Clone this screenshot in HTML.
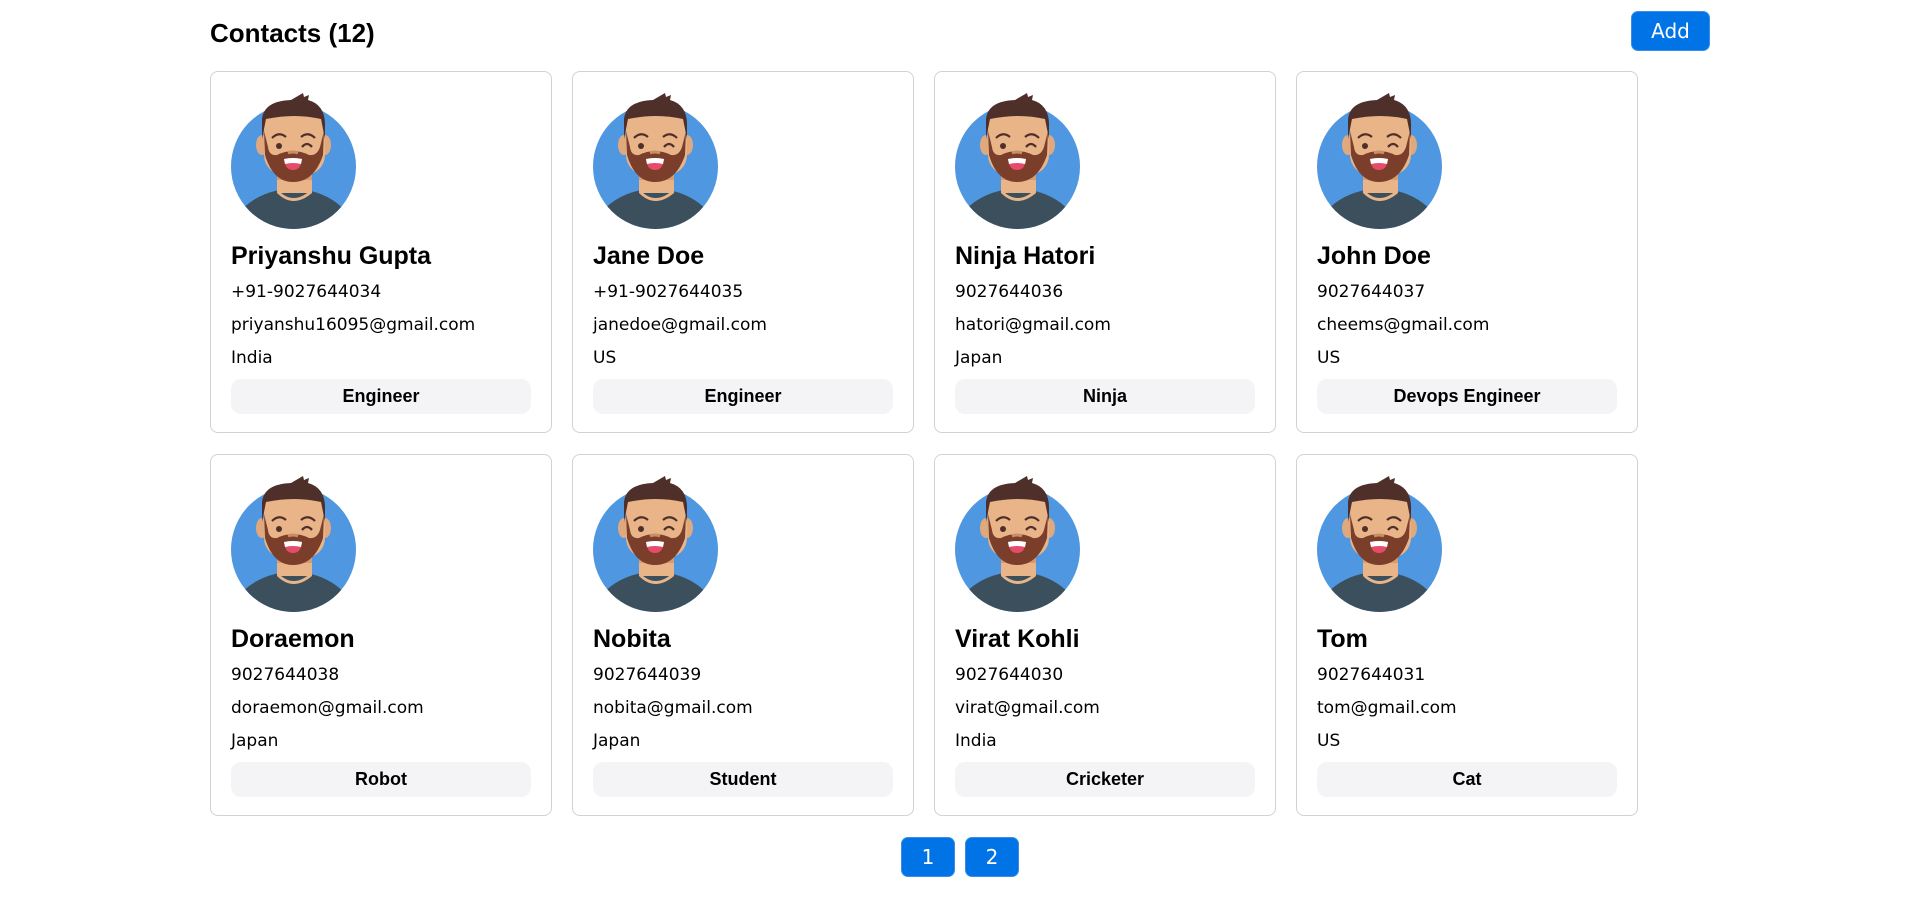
<!DOCTYPE html>
<html><head><meta charset="utf-8">
<style>
*{margin:0;padding:0;box-sizing:border-box}
body{width:1920px;height:898px;background:#fff;position:relative;overflow:hidden;font-family:"DejaVu Sans","Liberation Sans",sans-serif;color:#000}
h1{position:absolute;left:210px;top:18px;font:bold 26px "Liberation Sans",sans-serif}
.btn{position:absolute;background:#0073e6;color:#fff;border-radius:7px;font:20px "DejaVu Sans",sans-serif;display:flex;align-items:center;justify-content:center;border:1px solid #3a8ee6}
.card{position:absolute;width:342px;height:362px;border:1px solid #d2d2d2;border-radius:8px}
.card svg{position:absolute;left:14px;top:13px}
.nm{position:absolute;left:20px;top:170px;font:bold 25px "Liberation Sans",sans-serif;white-space:nowrap}
.l{position:absolute;left:20px;font-size:17px;white-space:nowrap}
.tag{position:absolute;left:20px;top:307px;width:300px;height:35px;background:#f4f4f6;border-radius:10px;font:bold 18px "Liberation Sans",sans-serif;display:flex;align-items:center;justify-content:center}
</style></head><body>
<svg width="0" height="0" style="position:absolute">
<defs>
<clipPath id="c"><circle cx="68.5" cy="81.5" r="62.5"/></clipPath>
<g id="av">
<circle cx="68.5" cy="81.5" r="62.5" fill="#4f97e0"/>
<g clip-path="url(#c)"><ellipse cx="68" cy="152" rx="62" ry="48" fill="#3c4f5c"/></g>
<rect x="52" y="88" width="35" height="20" fill="#e9b488"/>
<path d="M52,104 Q68,122 87,104 L87,108 Q68,124 52,108Z" fill="#e9b488"/>
<rect x="52" y="90" width="35" height="5" fill="#d49c70"/>
<ellipse cx="37" cy="60" rx="6" ry="10" fill="#e0a97d"/>
<ellipse cx="100" cy="60" rx="6" ry="10" fill="#e0a97d"/>
<rect x="39" y="22" width="61" height="68" rx="20" fill="#e9b488"/>
<path d="M37,54 L37,34 Q39,16 66,15 L78,8 L79,12 L84,10 L83,15 Q101,20 100,42 L100,54 L96,34 Q70,28 41,34 Z" fill="#4e2f2a"/>
<path d="M39,46 L40,70 Q48,97 68,97 Q89,97 98,70 L99,46 L95,62 Q92,71 84,70 Q68,62 52,70 Q44,71 43,62 Z" fill="#7a3e2b"/>
<path d="M59,74 Q68,72 77,74 Q76,85 68,85 Q60,85 59,74Z" fill="#e64b6a"/>
<path d="M59,74 Q68,72 77,74 L76,79 Q68,77 60,79Z" fill="#fff"/>
<circle cx="54" cy="61" r="3" fill="#4e2f2a"/>
<path d="M77,62 Q82,56 87,62" stroke="#4e2f2a" stroke-width="2.2" fill="none"/>
<path d="M47,53 Q54,46 61,52" stroke="#4e2f2a" stroke-width="2.2" fill="none"/>
<path d="M76,52 Q83,46 90,53" stroke="#4e2f2a" stroke-width="2.2" fill="none"/>
<path d="M63,68 Q68,66 73,68" stroke="#c78f62" stroke-width="3" fill="none"/>
</g></defs></svg>

<h1>Contacts (12)</h1>
<div class="btn" style="left:1631px;top:11px;width:79px;height:40px">Add</div>

<div class="card" style="left:210px;top:71px"><svg width="140" height="150"><use href="#av"/></svg><div class="nm">Priyanshu Gupta</div><div class="l" style="top:210px">+91-9027644034</div><div class="l" style="top:243px">priyanshu16095@gmail.com</div><div class="l" style="top:276px">India</div><div class="tag">Engineer</div></div>
<div class="card" style="left:572px;top:71px"><svg width="140" height="150"><use href="#av"/></svg><div class="nm">Jane Doe</div><div class="l" style="top:210px">+91-9027644035</div><div class="l" style="top:243px">janedoe@gmail.com</div><div class="l" style="top:276px">US</div><div class="tag">Engineer</div></div>
<div class="card" style="left:934px;top:71px"><svg width="140" height="150"><use href="#av"/></svg><div class="nm">Ninja Hatori</div><div class="l" style="top:210px">9027644036</div><div class="l" style="top:243px">hatori@gmail.com</div><div class="l" style="top:276px">Japan</div><div class="tag">Ninja</div></div>
<div class="card" style="left:1296px;top:71px"><svg width="140" height="150"><use href="#av"/></svg><div class="nm">John Doe</div><div class="l" style="top:210px">9027644037</div><div class="l" style="top:243px">cheems@gmail.com</div><div class="l" style="top:276px">US</div><div class="tag">Devops Engineer</div></div>

<div class="card" style="left:210px;top:454px"><svg width="140" height="150"><use href="#av"/></svg><div class="nm">Doraemon</div><div class="l" style="top:210px">9027644038</div><div class="l" style="top:243px">doraemon@gmail.com</div><div class="l" style="top:276px">Japan</div><div class="tag">Robot</div></div>
<div class="card" style="left:572px;top:454px"><svg width="140" height="150"><use href="#av"/></svg><div class="nm">Nobita</div><div class="l" style="top:210px">9027644039</div><div class="l" style="top:243px">nobita@gmail.com</div><div class="l" style="top:276px">Japan</div><div class="tag">Student</div></div>
<div class="card" style="left:934px;top:454px"><svg width="140" height="150"><use href="#av"/></svg><div class="nm">Virat Kohli</div><div class="l" style="top:210px">9027644030</div><div class="l" style="top:243px">virat@gmail.com</div><div class="l" style="top:276px">India</div><div class="tag">Cricketer</div></div>
<div class="card" style="left:1296px;top:454px"><svg width="140" height="150"><use href="#av"/></svg><div class="nm">Tom</div><div class="l" style="top:210px">9027644031</div><div class="l" style="top:243px">tom@gmail.com</div><div class="l" style="top:276px">US</div><div class="tag">Cat</div></div>

<div class="btn" style="left:901px;top:837px;width:54px;height:40px">1</div>
<div class="btn" style="left:965px;top:837px;width:54px;height:40px">2</div>
</body></html>
